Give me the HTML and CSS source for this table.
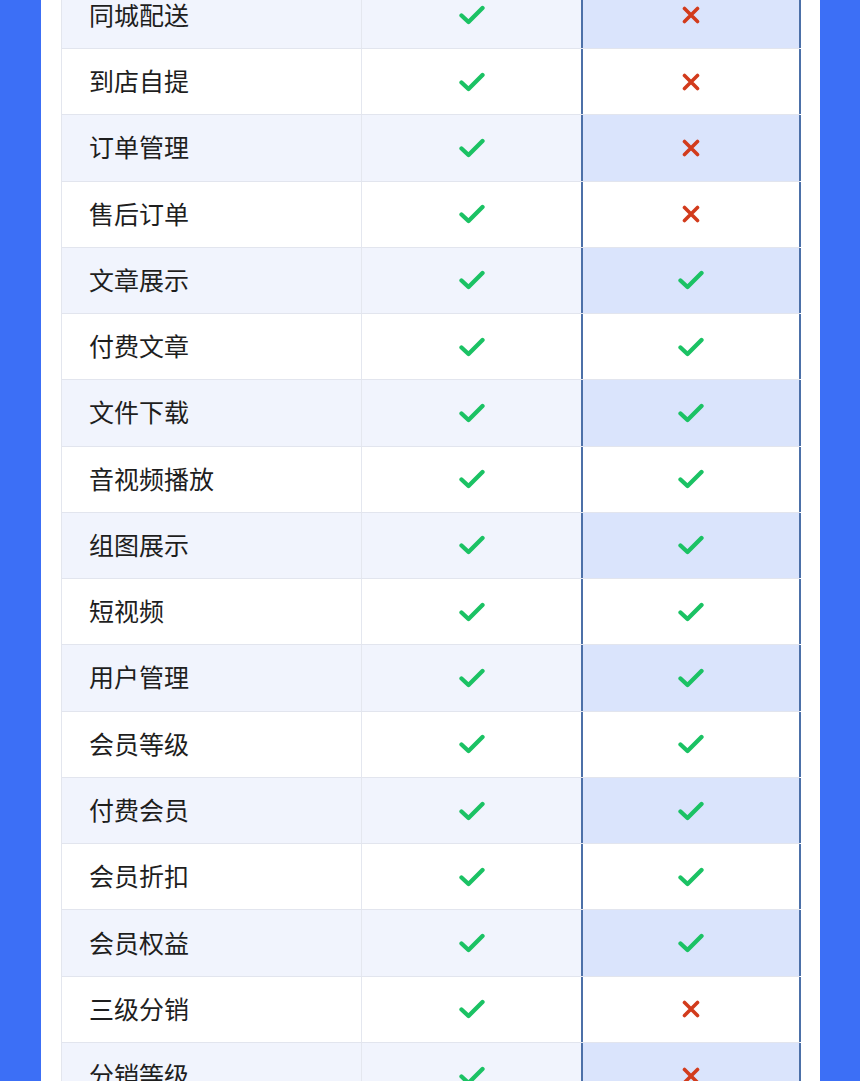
FILE: index.html
```html
<!DOCTYPE html>
<html lang="zh">
<head>
<meta charset="utf-8">
<link rel="stylesheet" href="styles.css">
</head>
<body>
<div class="page">
  <div class="panel">
    <div class="table" id="t"></div>
  </div>
</div>
<svg width="0" height="0" style="position:absolute">
  <defs>
    <symbol id="ok" viewBox="0 0 26 20"><path d="M2.5 10.5 L9.5 17 L23.5 3" fill="none" stroke="#1bc264" stroke-width="4.3" stroke-linecap="round" stroke-linejoin="round"/></symbol>
    <symbol id="no" viewBox="0 0 18 18"><path d="M2.5 2.5 L15.5 15.5 M15.5 2.5 L2.5 15.5" fill="none" stroke="#d23b1c" stroke-width="3.6" stroke-linecap="round"/></symbol>
  </defs>
</svg>
<script src="app.js"></script>
</body>
</html>
```

FILE: app.js
```js
const rows = [
  ["同城配送", 0], ["到店自提", 0], ["订单管理", 0], ["售后订单", 0],
  ["文章展示", 1], ["付费文章", 1], ["文件下载", 1], ["音视频播放", 1],
  ["组图展示", 1], ["短视频", 1], ["用户管理", 1], ["会员等级", 1],
  ["付费会员", 1], ["会员折扣", 1], ["会员权益", 1], ["三级分销", 0], ["分销等级", 0]
];
const ok = '<svg class="ic ok"><use href="#ok"/></svg>';
const no = '<svg class="ic no"><use href="#no"/></svg>';
document.getElementById('t').innerHTML = rows.map((r, i) =>
  `<div class="row ${i % 2 === 0 ? 'alt' : ''}">
    <div class="c name">${r[0]}</div>
    <div class="c mid">${ok}</div>
    <div class="c hl">${r[1] ? ok : no}</div>
  </div>`).join('');
```

FILE: styles.css
```css
html, body { margin: 0; padding: 0; }
body { background: #3c6ff6; font-family: "Noto Sans CJK SC", "Noto Sans", sans-serif; overflow: hidden; }
.page { width: 860px; height: 1081px; overflow: hidden; }
.panel { margin-left: 41px; width: 779px; height: 1081px; background: #fff; padding: 0 20px; box-sizing: border-box; overflow: hidden; }
.table { margin-top: -17.3px; border-left: 1px solid #e3e6ee; }
.row { display: grid; grid-template-columns: 300px 220px 219px; height: 66.27px; box-sizing: border-box; border-bottom: 1px solid #e2e5ee; background: #fff; }
.row.alt { background: #f1f4fd; }
.c { display: flex; align-items: center; }
.name { padding-left: 27px; padding-bottom: 3px; font-size: 25px; color: #1e1e1e; border-right: 1px solid #e4e7ef; }
.mid { justify-content: center; }
.hl { justify-content: center; border-left: 2px solid #4c70a8; border-right: 2px solid #4c70a8; margin-left: -1px; }
.row.alt .hl { background: #dae4fc; }
.ic.ok { width: 26px; height: 20px; }
.ic.no { width: 18px; height: 18px; }
```
